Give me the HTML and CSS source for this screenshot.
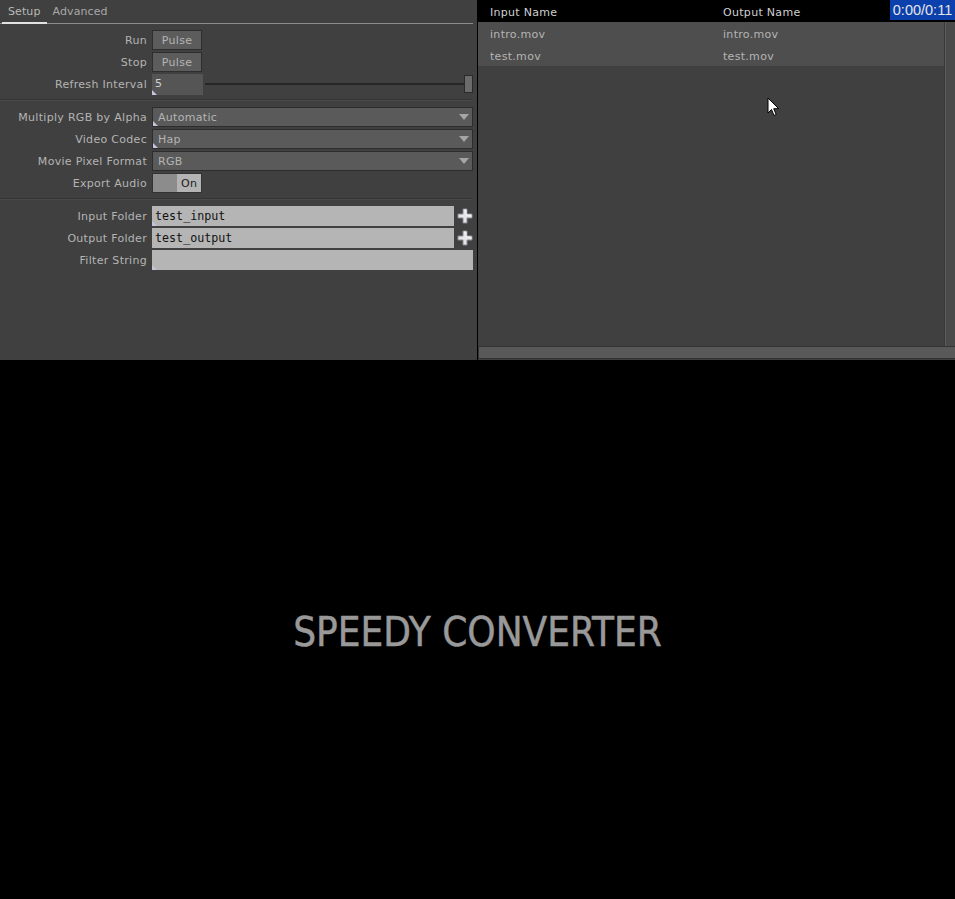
FILE: index.html
```html
<!DOCTYPE html>
<html>
<head>
<meta charset="utf-8">
<link rel="stylesheet" href="styles.css">
</head>
<body>
<div class="top">
  <div class="params">
    <div class="tabs">
      <span class="tab active">Setup</span>
      <span class="tab">Advanced</span>
    </div>
    <div class="group">
      <div class="row"><span class="label">Run</span><span class="btn">Pulse</span></div>
      <div class="row"><span class="label">Stop</span><span class="btn">Pulse</span></div>
      <div class="row"><span class="label">Refresh Interval</span>
        <span class="num mark">5</span>
        <span class="slider"><span class="track"></span><span class="handle"></span></span>
      </div>
    </div>
    <div class="sep"></div>
    <div class="group">
      <div class="row"><span class="label">Multiply RGB by Alpha</span><span class="menu mark">Automatic<i class="arrow"></i></span></div>
      <div class="row"><span class="label">Video Codec</span><span class="menu mark">Hap<i class="arrow"></i></span></div>
      <div class="row"><span class="label">Movie Pixel Format</span><span class="menu">RGB<i class="arrow"></i></span></div>
      <div class="row"><span class="label">Export Audio</span><span class="toggle"><span class="off"></span><span class="on">On</span></span></div>
    </div>
    <div class="sep"></div>
    <div class="group">
      <div class="row"><span class="label">Input Folder</span><span class="field mark">test_input</span>
        <svg class="plus" width="16" height="16" viewBox="0 0 16 16"><path d="M6 1h4v5h5v4h-5v5h-4v-5h-5v-4h5z" fill="#e4e4ea" stroke="#8a8a90" stroke-width="1"/><path d="M7 2h2v5h5v2" fill="none" stroke="#fff" stroke-width="0.8"/></svg>
      </div>
      <div class="row"><span class="label">Output Folder</span><span class="field">test_output</span>
        <svg class="plus" width="16" height="16" viewBox="0 0 16 16"><path d="M6 1h4v5h5v4h-5v5h-4v-5h-5v-4h5z" fill="#e4e4ea" stroke="#8a8a90" stroke-width="1"/><path d="M7 2h2v5h5v2" fill="none" stroke="#fff" stroke-width="0.8"/></svg>
      </div>
      <div class="row"><span class="label">Filter String</span><span class="field wide mark"></span></div>
    </div>
  </div>
  <div class="table">
    <div class="thead">
      <span class="col c1">Input Name</span>
      <span class="col c2">Output Name</span>
      <span class="time">0:00/0:11</span>
    </div>
    <div class="tbody">
      <div class="rows">
        <div class="trow"><span class="col c1">intro.mov</span><span class="col c2">intro.mov</span></div>
        <div class="trow"><span class="col c1">test.mov</span><span class="col c2">test.mov</span></div>
      </div>
      <div class="vscroll"></div>
    </div>
    <div class="hscroll"></div>
    <svg class="cursor" width="13" height="20" viewBox="0 0 13 20"><path d="M1 1v15l3.5-3.5 2.5 6 2.2-1-2.5-5.8h5z" fill="#fff" stroke="#000" stroke-width="1"/></svg>
  </div>
</div>
<div class="stage">
  <div class="title">SPEEDY CONVERTER</div>
</div>
</body>
</html>
```

FILE: styles.css
```css
* { box-sizing: border-box; }
html, body { margin: 0; padding: 0; }
body {
  background: #000;
  width: 955px;
  height: 899px;
  overflow: hidden;
  font-family: "DejaVu Sans", Verdana, sans-serif;
  font-size: 11px;
  letter-spacing: 0.3px;
  color: #b4b4b4;
}
.top {
  display: flex;
  height: 360px;
}
.params {
  width: 477px;
  margin-right: 1px;
  background: #404040;
  padding-right: 4px;
}
.tabs {
  display: flex;
  height: 24px;
  border-bottom: 1px solid #8c8c8c;
  padding-left: 2px;
}
.tab {
  padding: 5px 6px 0 6px;
  color: #a8a8a8;
  height: 23px;
  letter-spacing: 0.1px;
}
.tab.active {
  border-bottom: 2px solid #e2e2e2;
  color: #b8b8b8;
  margin-bottom: -1px;
  height: 24px;
}
.group {
  display: flex;
  flex-direction: column;
  gap: 2px;
  padding: 6px 0 5px 0;
}
.row {
  display: flex;
  align-items: center;
  height: 20px;
}
.label {
  width: 152px;
  padding-right: 5px;
  padding-top: 1px;
  text-align: right;
  white-space: nowrap;
  flex: none;
}
.btn {
  width: 50px;
  height: 20px;
  background: #5c5c5c;
  border: 1px solid #2e2e2e;
  text-align: center;
  line-height: 19px;
  color: #b4b4b4;
}
.mark { position: relative; }
.mark::after {
  content: "";
  position: absolute;
  left: 0;
  bottom: 0;
  border-left: 5px solid #c9c2dc;
  border-top: 5px solid transparent;
}
.num {
  width: 51px;
  height: 21px;
  background: #555;
  color: #d0d0d0;
  padding-left: 3px;
  line-height: 20px;
}
.slider {
  flex: 1;
  display: flex;
  align-items: center;
  height: 20px;
  padding-left: 2px;
}
.track {
  flex: 1;
  height: 2px;
  background: #262626;
}
.handle {
  width: 9px;
  height: 18px;
  background: #6b6b6b;
  border: 1px solid #2a2a2a;
}
.sep {
  height: 2px;
  border-top: 1px solid #353535;
  border-bottom: 1px solid #4a4a4a;
}
.menu {
  flex: 1;
  height: 20px;
  background: #5a5a5a;
  border: 1px solid #2d2d2d;
  padding-left: 5px;
  line-height: 19px;
  color: #b4b4b4;
  display: flex;
  justify-content: space-between;
  align-items: center;
}
.arrow {
  margin-right: 3px;
  border-top: 6px solid #a5a5a5;
  border-left: 5px solid transparent;
  border-right: 5px solid transparent;
}
.toggle {
  display: flex;
  width: 50px;
  height: 20px;
  border: 1px solid #333;
}
.toggle .off { width: 24px; background: #8c8c8c; }
.toggle .on {
  flex: 1;
  background: #b4b4b4;
  color: #1a1a1a;
  line-height: 19px;
  padding-left: 4px;
}
.field {
  width: 302px;
  height: 20px;
  background: #b5b5b5;
  color: #111;
  font-family: "DejaVu Sans Mono", monospace;
  font-size: 11.7px;
  letter-spacing: 0;
  line-height: 20px;
  padding-left: 3px;
}
.field.wide { width: 322px; }
.plus { margin-left: 3px; }
.table {
  flex: 1;
  background: #404040;
  display: flex;
  flex-direction: column;
  position: relative;
}
.thead {
  height: 22px;
  background: #000;
  display: flex;
  align-items: center;
  padding-top: 2px;
  color: #cfcfcf;
  position: relative;
}
.col { display: inline-block; }
.c1 { width: 245px; padding-left: 12px; }
.c2 { width: 200px; }
.time {
  position: absolute;
  right: 0;
  top: 0;
  width: 65px;
  height: 20px;
  background: #0c41ad;
  color: #e6e6e6;
  font-family: "Liberation Sans", Arial, sans-serif;
  font-size: 14.5px;
  letter-spacing: 0;
  line-height: 21px;
  text-align: center;
}
.tbody {
  flex: 1;
  display: flex;
}
.rows { flex: 1; }
.trow {
  height: 22px;
  background: #4e4e4e;
  display: flex;
  align-items: center;
  padding-top: 2px;
  color: #b4b4b4;
}
.vscroll {
  width: 11px;
  background: #4a4a4a;
  border-left: 1px solid #383838;
  box-shadow: inset 1px 0 0 #5c5c5c;
}
.hscroll {
  height: 13px;
  margin-bottom: 1px;
  background: #595959;
  border-top: 1px solid #333;
  border-left: 1px solid #333;
  border-bottom: 1px solid #333;
}
.cursor {
  position: absolute;
  left: 289px;
  top: 97px;
}
.stage {
  height: 539px;
  display: flex;
  align-items: center;
  justify-content: center;
}
.title {
  font-family: "DejaVu Sans Condensed", "DejaVu Sans", sans-serif;
  font-stretch: condensed;
  font-size: 40px;
  letter-spacing: 0;
  color: #999;
  margin-top: 4px;
  -webkit-text-stroke: 0.5px #999;
}
```
